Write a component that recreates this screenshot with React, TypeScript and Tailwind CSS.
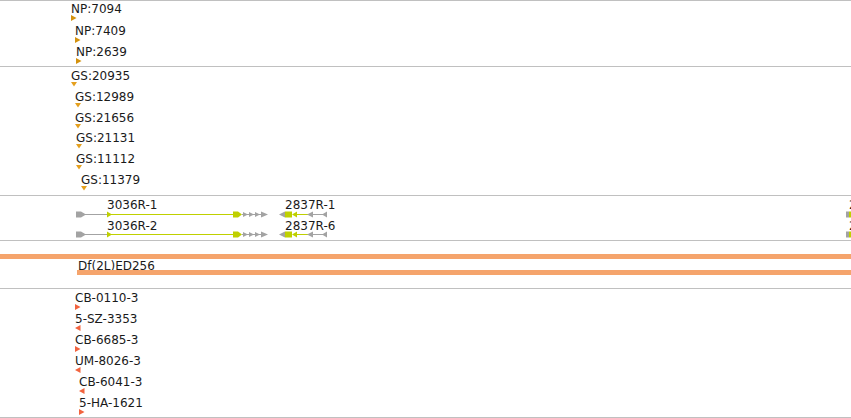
import React from 'react';

type Mark = { label: string; x: number; dir: 'right' | 'left' | 'down' };

const GRAY = '#a3a3a3';
const GREEN = '#bfd000';

const npMarks: Mark[] = [
  { label: 'NP:7094', x: 71, dir: 'right' },
  { label: 'NP:7409', x: 75, dir: 'right' },
  { label: 'NP:2639', x: 76, dir: 'right' },
];

const gsMarks: Mark[] = [
  { label: 'GS:20935', x: 71, dir: 'down' },
  { label: 'GS:12989', x: 75, dir: 'down' },
  { label: 'GS:21656', x: 75, dir: 'down' },
  { label: 'GS:21131', x: 76, dir: 'down' },
  { label: 'GS:11112', x: 76, dir: 'down' },
  { label: 'GS:11379', x: 81, dir: 'down' },
];

const cbMarks: Mark[] = [
  { label: 'CB-0110-3', x: 75, dir: 'right' },
  { label: '5-SZ-3353', x: 75, dir: 'left' },
  { label: 'CB-6685-3', x: 75, dir: 'right' },
  { label: 'UM-8026-3', x: 75, dir: 'left' },
  { label: 'CB-6041-3', x: 79, dir: 'left' },
  { label: '5-HA-1621', x: 79, dir: 'right' },
];

function Tri({ dir, color }: { dir: Mark['dir']; color: string }) {
  if (dir === 'down') {
    return (
      <svg width="6" height="5" viewBox="0 0 6 5" className="block shrink-0">
        <polygon points="0,0 6,0 3,4.5" fill={color} />
      </svg>
    );
  }
  return (
    <svg width="6" height="6" viewBox="0 0 6 6" className="block shrink-0">
      {dir === 'right' ? (
        <polygon points="0,0 5.5,3 0,6" fill={color} />
      ) : (
        <polygon points="5.5,0 0,3 5.5,6" fill={color} />
      )}
    </svg>
  );
}

// one stacked row per feature; x is the feature's place on the map
function MarkList({ marks, color }: { marks: Mark[]; color: string }) {
  return (
    <div className="flex flex-col">
      {marks.map((m) => (
        <div key={m.label} className="flex h-[21px] shrink-0 flex-col items-start" style={{ paddingLeft: m.x }}>
          <div className="h-[13px] shrink-0 whitespace-nowrap text-[12px] leading-[14px] text-[#1a1a1a]">{m.label}</div>
          <Tri dir={m.dir} color={color} />
        </div>
      ))}
    </div>
  );
}

function GeneRow() {
  return (
    <svg width="851" height="7" viewBox="0 0 851 7" className="block shrink-0">
      {/* 3036R */}
      <line x1="84" y1="3.5" x2="108" y2="3.5" stroke={GRAY} />
      <polygon points="76,0.5 81,0.5 86,3.5 81,6.5 76,6.5" fill={GRAY} />
      <line x1="110" y1="3.5" x2="235" y2="3.5" stroke={GREEN} />
      <polygon points="107,0.5 112,3.5 107,6.5" fill={GREEN} />
      <polygon points="233,0.5 238,0.5 242,3.5 238,6.5 233,6.5" fill={GREEN} />
      <line x1="242" y1="3.5" x2="266" y2="3.5" stroke={GRAY} />
      <polygon points="243,1 248,3.5 243,6" fill={GRAY} />
      <polygon points="249,1 254,3.5 249,6" fill={GRAY} />
      <polygon points="255,1 260,3.5 255,6" fill={GRAY} />
      <polygon points="261,0.5 268,3.5 261,6.5" fill={GRAY} />
      {/* 2837R */}
      <polygon points="285,0.5 279,3.5 285,6.5" fill={GRAY} />
      <rect x="285" y="0.5" width="7" height="6" fill={GREEN} />
      <polygon points="297,0.5 292,3.5 297,6.5" fill={GREEN} />
      <line x1="296" y1="3.5" x2="308" y2="3.5" stroke={GREEN} />
      <polygon points="313,0.5 307,3.5 313,6.5" fill={GRAY} />
      <line x1="312" y1="3.5" x2="323" y2="3.5" stroke={GRAY} />
      <polygon points="327,0.5 322,3.5 327,6.5" fill={GRAY} />
      {/* next gene, cut off at the right edge */}
      <rect x="846" y="0.5" width="3" height="6" fill={GRAY} />
      <rect x="849" y="0.5" width="2" height="6" fill={GREEN} />
    </svg>
  );
}

function GeneLabels({ a, b, c }: { a: string; b: string; c: string }) {
  return (
    <div className="flex h-[13px] shrink-0 whitespace-nowrap text-[12px] leading-[14px] text-[#1a1a1a]">
      <span className="ml-[107px] w-[178px] shrink-0">{a}</span>
      <span className="w-[564px] shrink-0">{b}</span>
      <span className="shrink-0">{c}</span>
    </div>
  );
}

export default function App() {
  return (
    <div
      className="flex h-[418px] w-[851px] flex-col overflow-hidden bg-white"
      style={{ fontFamily: '"DejaVu Sans", Verdana, sans-serif' }}
    >
      {/* NP track */}
      <div className="h-[67px] shrink-0 overflow-hidden border-y border-[#c0c0c0] pt-px [&>div>div]:h-[21.5px]">
        <MarkList marks={npMarks} color="#d4920e" />
      </div>

      {/* GS track */}
      <div className="h-[129px] shrink-0 overflow-hidden border-b border-[#c0c0c0] pt-[2px] [&>div>div]:h-[20.8px]">
        <MarkList marks={gsMarks} color="#e5a01e" />
      </div>

      {/* gene models */}
      <div className="flex h-[45px] shrink-0 flex-col overflow-hidden border-b border-[#c0c0c0] pt-[2px]">
        <GeneLabels a="3036R-1" b="2837R-1" c="2838R-1" />
        <GeneRow />
        <div className="mt-px">
          <GeneLabels a="3036R-2" b="2837R-6" c="2838R-2" />
        </div>
        <div className="-mt-px">
          <GeneRow />
        </div>
      </div>

      {/* deficiency */}
      <div className="flex h-[48px] shrink-0 flex-col overflow-hidden border-b border-[#c0c0c0] pt-[13px]">
        <div className="h-[5px] shrink-0 bg-[#f5a46c]" />
        <div className="h-[11px] shrink-0 pl-[78px] text-[12px] leading-[14px] text-[#1a1a1a]">Df(2L)ED256</div>
        <div className="ml-[77px] h-[5px] shrink-0 bg-[#f5a46c]" />
      </div>

      {/* CB track */}
      <div className="h-[129px] shrink-0 overflow-hidden border-b border-[#c0c0c0] pt-[2px]">
        <MarkList marks={cbMarks} color="#f2643f" />
      </div>
    </div>
  );
}
